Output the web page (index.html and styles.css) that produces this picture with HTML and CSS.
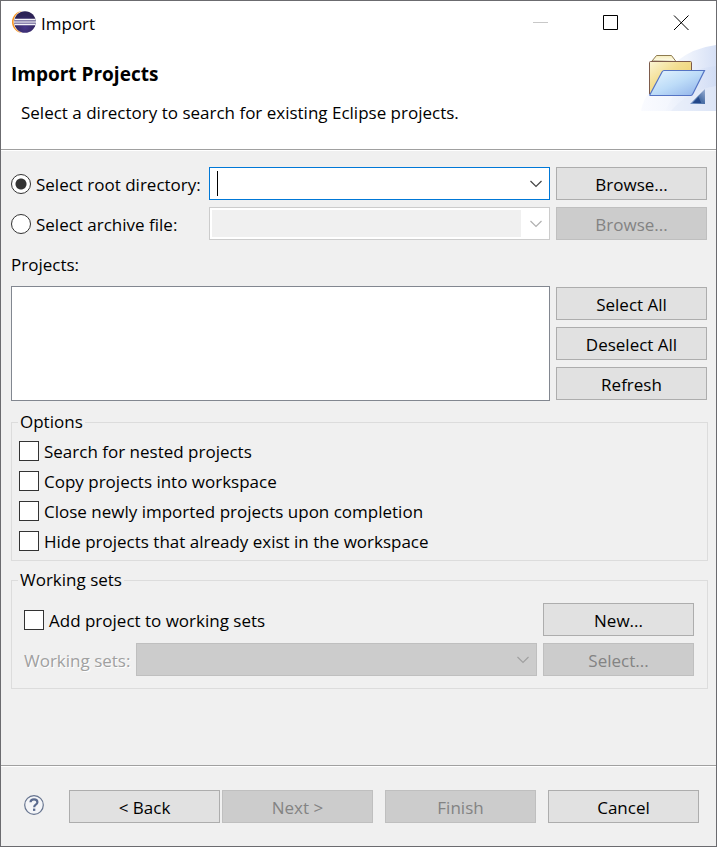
FILE: index.html
```html
<!DOCTYPE html>
<html lang="en">
<head>
<meta charset="utf-8">
<title>Import</title>
<link rel="stylesheet" href="styles.css">
</head>
<body>
<div class="dialog">
  <div class="titlebar">
    <svg class="app-icon" width="26" height="24" viewBox="0 0 26 24" aria-hidden="true">
      <defs>
        <radialGradient id="orb" cx="50%" cy="75%" r="60%">
          <stop offset="0" stop-color="#473788"/>
          <stop offset="1" stop-color="#2c2255"/>
        </radialGradient>
      </defs>
      <circle cx="12" cy="11" r="11" fill="#f7941e"/>
      <circle cx="14" cy="11" r="11.400" fill="#fff"/>
      <circle cx="14" cy="11" r="10.800" fill="url(#orb)"/>
      <path d="M3.500 8.500h21M3 11h22M3.500 13.500h21" stroke="#f4f3f8" stroke-width="1.400"/>
      <path d="M3.200 9.800h21.600M3.200 12.300h21.600" stroke="#9690b8" stroke-width="1"/>
    </svg>
    <span class="window-title">Import</span>
    <div class="window-controls">
      <button class="window-button" aria-label="Minimize" disabled>
        <svg width="16" height="16" viewBox="0 0 16 16"><path d="M0 7.500h15" stroke="#c8c8c8"/></svg>
      </button>
      <button class="window-button" aria-label="Maximize">
        <svg width="16" height="16" viewBox="0 0 16 16"><path d="M.5.5h14v14H.5z" fill="none" stroke="#000"/></svg>
      </button>
      <button class="window-button" aria-label="Close">
        <svg width="16" height="16" viewBox="0 0 16 16"><path d="M1 .5l14.500 14.500M15.500 .5L1 15" stroke="#000"/></svg>
      </button>
    </div>
  </div>

  <header class="banner">
    <div class="banner-text">
      <h1>Import Projects</h1>
      <p>Select a directory to search for existing Eclipse projects.</p>
    </div>
    <svg class="banner-art" width="75" height="66" viewBox="0 0 75 66" aria-hidden="true">
      <defs>
        <linearGradient id="sky" x1="0" y1="0" x2="1" y2="0">
          <stop offset="0" stop-color="#fafbff"/>
          <stop offset=".6" stop-color="#f0f4fc"/>
          <stop offset="1" stop-color="#d6e0f6"/>
        </linearGradient>
        <linearGradient id="sky2" x1="0" y1="0" x2="1" y2="0">
          <stop offset="0" stop-color="#f3f6fd"/>
          <stop offset="1" stop-color="#cfdbf4"/>
        </linearGradient>
        <linearGradient id="manila" x1="0" y1="0" x2="1" y2="1">
          <stop offset="0" stop-color="#fbf5d5"/>
          <stop offset=".4" stop-color="#f3de91"/>
          <stop offset="1" stop-color="#eccb62"/>
        </linearGradient>
        <linearGradient id="tab" x1="0" y1="0" x2="0" y2="1">
          <stop offset="0" stop-color="#f6edbb"/>
          <stop offset="1" stop-color="#fffdf0"/>
        </linearGradient>
        <linearGradient id="flap" x1="0" y1="0" x2="1" y2="1">
          <stop offset="0" stop-color="#e8f6ff"/>
          <stop offset=".5" stop-color="#bddcf8"/>
          <stop offset="1" stop-color="#8caee8"/>
        </linearGradient>
        <linearGradient id="corner" x1="0" y1="1" x2="1" y2="0">
          <stop offset="0" stop-color="#7d9ac8"/>
          <stop offset=".5" stop-color="#4a6fa6"/>
          <stop offset="1" stop-color="#9db2d6"/>
        </linearGradient>
      </defs>
      <path d="M0 66Q2 54 9 47L36 16Q52 3 75 0V66Z" fill="url(#sky)"/>
      <path d="M40 36Q52 23 75 21V66H24Z" fill="url(#sky2)" opacity=".7"/>
      <path d="M30 66Q48 45 75 41V66Z" fill="#e4ebf9" opacity=".6"/>
      <path d="M11 16L15.500 10.500H30.500L35 16.500Z" fill="url(#tab)" stroke="#8e7b50"/>
      <path d="M8.500 49V17.500Q8.500 16.500 9.500 16.500H49.500Q50.500 16.500 50.500 17.500V49Z" fill="url(#manila)" stroke="#7d5b4b"/>
      <path d="M9.500 50.500Q8.500 50.500 9 49.500L21 27Q22 25.500 23 25.500H63.500L52 48.500Q51 50.500 50 50.500Z" fill="url(#flap)" stroke="#5574c4" stroke-width="1.200"/>
      <path d="M49 59L64 44V59Z" fill="url(#corner)"/>
      <path d="M51.500 58l6-6 3 6Z" fill="#24488a"/>
    </svg>
  </header>

  <main>
    <div class="source-grid">
      <label class="choice"><input type="radio" name="source" checked>Select root directory:</label>
      <div class="combo combo-active">
        <input class="combo-text" type="text" aria-label="Root directory">
        <button class="combo-arrow" aria-label="Show recent directories"><svg width="12" height="8" viewBox="0 0 12 8"><path d="M.5 1L6 6.500 11.500 1" fill="none" stroke="currentColor" stroke-width="1.200"/></svg></button>
      </div>
      <button class="push">Browse...</button>

      <label class="choice"><input type="radio" name="source">Select archive file:</label>
      <div class="combo combo-disabled">
        <input class="combo-text" type="text" aria-label="Archive file" disabled>
        <button class="combo-arrow" aria-label="Show recent archives" disabled><svg width="12" height="8" viewBox="0 0 12 8"><path d="M.5 1L6 6.500 11.500 1" fill="none" stroke="currentColor" stroke-width="1.200"/></svg></button>
      </div>
      <button class="push" disabled>Browse...</button>
    </div>

    <h2 class="list-label" id="projects-label">Projects:</h2>
    <div class="project-area">
      <div class="project-list" role="tree" aria-labelledby="projects-label" tabindex="0"></div>
      <div class="project-actions">
        <button class="push">Select All</button>
        <button class="push">Deselect All</button>
        <button class="push">Refresh</button>
      </div>
    </div>

    <fieldset class="options">
      <legend>Options</legend>
      <label class="choice"><input type="checkbox">Search for nested projects</label>
      <label class="choice"><input type="checkbox">Copy projects into workspace</label>
      <label class="choice"><input type="checkbox">Close newly imported projects upon completion</label>
      <label class="choice"><input type="checkbox">Hide projects that already exist in the workspace</label>
    </fieldset>

    <fieldset class="working-sets">
      <legend>Working sets</legend>
      <div class="set-row">
        <label class="choice"><input type="checkbox">Add project to working sets</label>
        <button class="push">New...</button>
      </div>
      <div class="set-row">
        <label class="muted-label" for="sets">Working sets:</label>
        <div class="select-wrap">
          <select id="sets" disabled></select>
          <svg class="select-arrow" width="12" height="8" viewBox="0 0 12 8" aria-hidden="true"><path d="M.5 1L6 6.500 11.500 1" fill="none" stroke="currentColor" stroke-width="1.200"/></svg>
        </div>
        <button class="push" disabled>Select...</button>
      </div>
    </fieldset>
  </main>

  <footer>
    <button class="help" aria-label="Help">
      <svg width="20" height="20" viewBox="0 0 20 20">
        <circle cx="10" cy="10" r="9.300" fill="#f4f5f8" stroke="#66748f" stroke-width="1.200"/>
        <path d="M6.500 7.300Q6.600 4.300 10 4.300T13.400 7.200Q13.400 8.600 11.800 9.600T10.200 12.200" fill="none" stroke="#5b6b8f" stroke-width="2.200"/>
        <path d="M9 13.600h2.300v2.300H9z" fill="#5b6b8f"/>
      </svg>
    </button>
    <div class="nav-pair">
      <button class="push">&lt; Back</button>
      <button class="push" disabled>Next &gt;</button>
    </div>
    <button class="push" disabled>Finish</button>
    <button class="push">Cancel</button>
  </footer>
</div>
</body>
</html>
```
FILE: styles.css
```css
* {
  box-sizing: border-box;
}

body {
  margin: 0;
  color: #000;
  background: #f0f0f0;
  font: 17px/22px "Open Sans", "Noto Sans", sans-serif;
}

button,
input,
select {
  margin: 0;
  color: inherit;
  font: inherit;
}

.dialog {
  display: flex;
  flex-direction: column;
  min-height: 100vh;
  border: 1px solid #6b6b6f;
}

.titlebar {
  display: flex;
  align-items: center;
  height: 44px;
  padding-left: 10px;
  background: #fff;
}

.window-title {
  margin-left: 4px;
  padding-top: 2px;
}

.window-controls {
  display: flex;
  margin-left: auto;
}

.window-button {
  display: flex;
  align-items: center;
  justify-content: center;
  width: 70px;
  height: 44px;
  padding: 0;
  border: 0;
  background: none;
}

.banner {
  display: flex;
  justify-content: space-between;
  align-items: flex-start;
  height: 106px;
  background: #fff;
  border-bottom: 1px solid #fff;
  box-shadow: inset 0 -1px #a0a0a0;
}

.banner-text {
  padding: 18px 0 0 10px;
}

h1 {
  margin: 0 0 17px;
  font-size: 19px;
  font-weight: 700;
  line-height: 22px;
}

.banner p {
  margin: 0 0 0 10px;
}

main {
  flex: 1;
  padding: 16px 8px 0 10px;
}

.source-grid {
  display: grid;
  grid-template-columns: 192px 1fr 151px;
  gap: 7px 6px;
  margin-right: 1px;
}

.choice {
  display: flex;
  align-items: center;
  gap: 5px;
  padding-top: 2px;
  white-space: nowrap;
}

.choice input {
  appearance: none;
  flex: none;
  width: 20px;
  height: 20px;
  margin-bottom: 2px;
  border: 1px solid #333;
  background: #fff;
}

.choice input[type="radio"] {
  border-radius: 50%;
}

.choice input[type="radio"]:checked {
  background: radial-gradient(circle, #333 5px, #fff 6px);
}

.push {
  width: 151px;
  height: 33px;
  padding: 2px 0 0;
  border: 1px solid #adadad;
  background: #e1e1e1;
}

.push:disabled {
  border-color: #bfbfbf;
  background: #ccc;
  color: #838383;
}

.combo {
  display: flex;
  height: 33px;
  border: 1px solid #ccc;
  background: #fff;
}

.combo-active {
  border-color: #0078d7;
}

.combo-text {
  flex: 1;
  min-width: 0;
  margin: 2px 0 2px 2px;
  padding: 0 6px;
  border: 0;
  outline: 0;
  background: #fff;
}

/* Insertion caret of the focused field */
.combo-active .combo-text {
  background: linear-gradient(#000, #000) 5px center / 1px 25px no-repeat #fff;
}

.combo-disabled .combo-text {
  background: #f0f0f0;
}

.combo-arrow {
  display: flex;
  align-items: center;
  justify-content: center;
  width: 28px;
  padding: 0 0 0 2px;
  border: 0;
  background: none;
  color: #444;
}

.combo-arrow:disabled {
  color: #b0b0b0;
}

.list-label {
  margin: 14px 0 10px;
  font-size: 17px;
  font-weight: 400;
  line-height: 22px;
}

.project-area {
  display: flex;
  gap: 6px;
  margin-right: 1px;
}

.project-list {
  flex: 1;
  min-height: 115px;
  border: 1px solid #828790;
  background: #fff;
}

.project-actions {
  display: flex;
  flex-direction: column;
  gap: 7px;
  padding-top: 1px;
}

fieldset {
  min-width: 0;
  margin: 10px 0 0;
  border: 1px solid #dcdcdc;
}

legend {
  padding: 0 2px;
}

.options {
  padding: 3px 7px 4px;
}

.options legend {
  margin-left: -1px;
}

.options .choice {
  height: 30px;
}

.working-sets {
  margin-top: 8px;
  padding: 12px 13px 12px 12px;
}

.working-sets legend {
  margin-left: -6px;
}

.set-row {
  display: flex;
  align-items: center;
  gap: 6px;
}

.set-row + .set-row {
  margin-top: 7px;
}

.set-row > .choice {
  flex: 1;
}

.muted-label {
  width: 106px;
  padding-top: 2px;
  color: #a0a0a0;
  text-shadow: 1px 1px #fff;
  white-space: nowrap;
}

.select-wrap {
  position: relative;
  flex: 1;
}

.select-wrap select {
  appearance: none;
  display: block;
  width: 100%;
  height: 33px;
  border: 1px solid #bfbfbf;
  border-radius: 0;
  background: #ccc;
  opacity: 1;
}

.select-arrow {
  position: absolute;
  top: 13px;
  right: 8px;
  color: #a0a0a0;
}

footer {
  display: flex;
  align-items: center;
  gap: 12px;
  height: 81px;
  padding: 1px 17px 0 23px;
  border-top: 1px solid #a0a0a0;
  box-shadow: inset 0 1px #fff;
}

.help {
  display: flex;
  margin-right: auto;
  padding: 0 0 3px;
  border: 0;
  background: none;
}

.nav-pair {
  display: flex;
  gap: 2px;
}
```
